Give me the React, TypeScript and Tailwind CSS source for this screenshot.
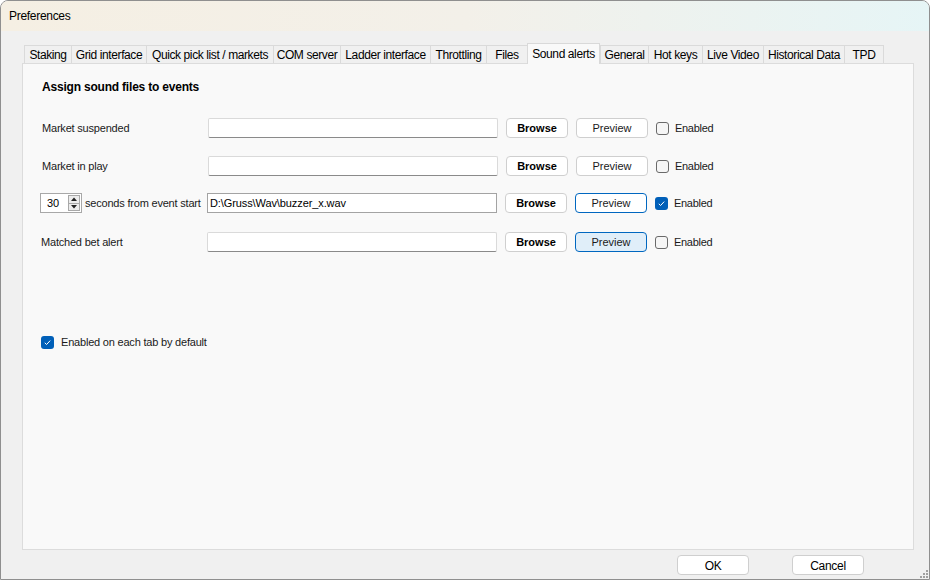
import React from "react";

const TABS = [
  { label: "Staking", w: "w-[47px]" },
  { label: "Grid interface", w: "w-[75px]" },
  { label: "Quick pick list / markets", w: "w-[127px]" },
  { label: "COM server", w: "w-[67px]" },
  { label: "Ladder interface", w: "w-[90px]" },
  { label: "Throttling", w: "w-[56px]" },
  { label: "Files", w: "w-[41px]" },
  { label: "Sound alerts", w: "w-[73px]", active: true },
  { label: "General", w: "w-[48px]" },
  { label: "Hot keys", w: "w-[54px]" },
  { label: "Live Video", w: "w-[61px]" },
  { label: "Historical Data", w: "w-[81px]" },
  { label: "TPD", w: "w-[40px]", last: true },
];

function Check({ checked }: { checked?: boolean }) {
  if (checked) {
    return (
      <span className="flex h-[13px] w-[13px] shrink-0 items-center justify-center rounded-[3px] bg-[#005fb8]">
        <svg width="9" height="9" viewBox="0 0 9 9">
          <path d="M1.8 4.8 L3.6 6.5 L7.2 2.6" fill="none" stroke="#fff" strokeWidth="1" />
        </svg>
      </span>
    );
  }
  return <span className="h-[13px] w-[13px] shrink-0 rounded-[3px] border border-[#6a6a6a] bg-[#f6f6f6]" />;
}

function Buttons({ preview }: { preview: "normal" | "focus" | "hover" }) {
  const pv =
    preview === "normal"
      ? "border-[#cfcfcf] bg-white"
      : preview === "focus"
      ? "border-[#0067c0] bg-white"
      : "border-[#0067c0] bg-[#e0eef9]";
  return (
    <>
      <button className="ml-[8px] flex h-[20px] w-[62px] items-center justify-center rounded-[4px] border border-[#cfcfcf] bg-white text-[11px] font-bold text-black">
        Browse
      </button>
      <button className={`ml-[8px] flex h-[20px] w-[72px] items-center justify-center rounded-[4px] border text-[11px] text-[#1a1a1a] ${pv}`}>
        Preview
      </button>
    </>
  );
}

function Enabled({ checked }: { checked?: boolean }) {
  return (
    <div className="ml-[8px] flex items-center gap-[6px]">
      <Check checked={checked} />
      <span className="text-[11px] tracking-[-0.3px] text-[#1a1a1a]">Enabled</span>
    </div>
  );
}

export default function App() {
  return (
    <div className="relative flex h-[580px] w-[930px] flex-col overflow-hidden rounded-t-[8px] border border-[#8f8f8f] bg-[#f0f0f0] font-['Liberation_Sans',Arial,sans-serif] text-[#1a1a1a]">
      {/* Title bar */}
      <div className="flex h-[30px] shrink-0 items-center bg-linear-to-r from-[#f5efe3] via-[#f3f0e9] to-[#e6f5f6] px-[8px] text-[12px] tracking-[-0.3px] text-black">
        Preferences
      </div>

      <div className="flex flex-1 flex-col pl-[21px] pr-[15px] pt-[12px]">
        {/* Tabs */}
        <div className="ml-[2px] flex h-[20px] items-end">
          {TABS.map((t) =>
            t.active ? (
              <div
                key={t.label}
                className={`relative z-10 -mb-px flex h-[21px] ${t.w} items-start justify-center border-x border-t border-[#d9d9d9] bg-[#f9f9f9] pt-[1px] text-[12px] tracking-[-0.4px] text-black`}
              >
                {t.label}
              </div>
            ) : (
              <div
                key={t.label}
                className={`flex h-[18px] ${t.w} items-center justify-center border-l border-t border-[#dadada] ${t.last ? "border-r" : ""} bg-[#f0f0f0] text-[12px] tracking-[-0.4px] text-black`}
              >
                {t.label}
              </div>
            )
          )}
        </div>

        {/* Panel */}
        <div className="flex h-[487px] shrink-0 flex-col border border-[#dcdcdc] bg-[#f9f9f9] pl-[19px] pt-[16px]">
          <div className="h-[14px] text-[12px] font-bold leading-[14px] tracking-[-0.2px] text-black">
            Assign sound files to events
          </div>

          <div className="mt-[24px] flex h-[20px] items-center">
            <span className="w-[166px] text-[11px] tracking-[-0.2px]">Market suspended</span>
            <div className="h-[20px] w-[290px] rounded-[2px] border border-[#dadada] border-b-[#8a8a8a] bg-white" />
            <Buttons preview="normal" />
            <Enabled />
          </div>

          <div className="mt-[18px] flex h-[20px] items-center">
            <span className="w-[166px] text-[11px] tracking-[-0.2px]">Market in play</span>
            <div className="h-[20px] w-[290px] rounded-[2px] border border-[#dadada] border-b-[#8a8a8a] bg-white" />
            <Buttons preview="normal" />
            <Enabled />
          </div>

          <div className="-ml-[2px] mt-[17px] flex h-[20px] items-center">
            <div className="flex h-[20px] w-[42px] items-center border border-[#a8a8a8] bg-white pl-[6px]">
              <span className="w-[21px] text-[11px] text-black">30</span>
              <div className="flex h-[16px] w-[12px] flex-col border border-[#a8a8a8] bg-[#ececec]">
                <div className="flex flex-1 items-center justify-center border-b border-[#a8a8a8]">
                  <svg width="6" height="4" viewBox="0 0 6 4">
                    <path d="M0 4 L3 0.5 L6 4 Z" fill="#222" />
                  </svg>
                </div>
                <div className="flex flex-1 items-center justify-center">
                  <svg width="6" height="4" viewBox="0 0 6 4">
                    <path d="M0 0 L3 3.5 L6 0 Z" fill="#222" />
                  </svg>
                </div>
              </div>
            </div>
            <span className="ml-[3px] w-[122px] whitespace-nowrap text-[11px] tracking-[-0.2px]">
              seconds from event start
            </span>
            <div className="flex h-[20px] w-[290px] items-center border border-[#a3a3a3] bg-white pl-[2px] text-[11px] tracking-[-0.1px] text-black">
              {"D:\\Gruss\\Wav\\buzzer_x.wav"}
            </div>
            <Buttons preview="focus" />
            <Enabled checked />
          </div>

          <div className="-ml-[1px] mt-[19px] flex h-[20px] items-center">
            <span className="w-[166px] text-[11px] tracking-[-0.2px]">Matched bet alert</span>
            <div className="h-[20px] w-[290px] rounded-[2px] border border-[#dadada] border-b-[#8a8a8a] bg-white" />
            <Buttons preview="hover" />
            <Enabled />
          </div>

          <div className="-ml-[1px] mt-[83px] flex h-[14px] items-center gap-[7px]">
            <Check checked />
            <span className="text-[11px] tracking-[-0.2px]">Enabled on each tab by default</span>
          </div>
        </div>

        {/* Bottom buttons */}
        <div className="mt-[5px] flex justify-end gap-[43px] pr-[50px]">
          <button className="flex h-[20px] w-[72px] items-center justify-center rounded-[4px] border border-[#cfcfcf] bg-white pt-px text-[12px] tracking-[-0.3px] text-black">
            OK
          </button>
          <button className="flex h-[20px] w-[72px] items-center justify-center rounded-[4px] border border-[#cfcfcf] bg-white pt-px text-[12px] tracking-[-0.3px] text-black">
            Cancel
          </button>
        </div>
      </div>

      {/* Resize grip */}
      <svg className="absolute bottom-[1px] right-[1px]" width="10" height="10" viewBox="0 0 10 10">
        {[
          [8, 2],
          [5, 5],
          [8, 5],
          [2, 8],
          [5, 8],
          [8, 8],
        ].map(([x, y], i) => (
          <rect key={i} x={x} y={y} width="2" height="2" fill="#a0a0a0" />
        ))}
      </svg>
    </div>
  );
}
